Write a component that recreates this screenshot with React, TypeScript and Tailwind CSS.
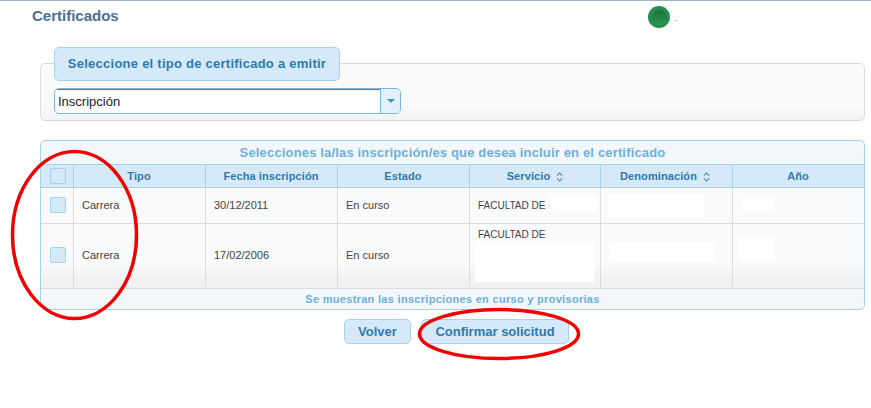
const columns = "grid grid-cols-[32px_132px_132px_132px_131px_132px_132px]";

function SortIcon() {
  return (
    <svg width="7" height="10" viewBox="0 0 7 10" className="ml-[6px] inline-block" fill="none" stroke="#5c93bb" strokeWidth="1.2">
      <path d="M1 3.5 L3.5 1 L6 3.5" />
      <path d="M1 6.5 L3.5 9 L6 6.5" />
    </svg>
  );
}

function Checkbox() {
  return <div className="h-4 w-4 rounded-[2px] border border-[#a9d0ec] bg-[#d6e9f8]" />;
}

function HeadCell({ label, sort, className = "pr-px" }: { label: string; sort?: boolean; className?: string }) {
  return (
    <div className={`flex items-center justify-center border-l border-[#a9d0ec] pt-px ${className}`}>
      {label}
      {sort ? <SortIcon /> : null}
    </div>
  );
}

function Cell({ children, className = "" }: { children?: React.ReactNode; className?: string }) {
  return <div className={`relative flex items-center border-l border-[#dcdcdc] ${className}`}>{children}</div>;
}

export default function App() {
  return (
    <div className="relative h-[408px] w-[871px] overflow-hidden bg-white font-['Liberation_Sans',Arial,sans-serif]">
      <div className="h-px bg-[#9fb3c8]" />
      <header className="flex h-[46px] items-start pl-8 pt-[5px]">
        <h1 className="w-[616px] pt-px text-[15px] leading-[17px] font-bold text-[#4a7094]">Certificados</h1>
        <div className="flex items-end">
          <div className="flex h-[22px] w-[22px] items-center justify-center rounded-full bg-[#278c4e]">
            <div className="h-[15px] w-[15px] rounded-full bg-[linear-gradient(#1d7039,#2a9a55)]" />
          </div>
          <span className="mb-[7px] ml-[5px] h-px w-px bg-[#888]" />
        </div>
      </header>

      <section className="relative mx-10 mt-4 h-[58px] w-[825px] rounded-[5px] border border-[#dcdcdc] bg-[linear-gradient(#f9fafc_0%,#f9fafc_75%,#f0f2f5_100%)] pl-[13px]">
        <div className="absolute -top-[17px] left-[13px] flex h-[34px] w-[286px] items-center justify-center rounded-[5px] border border-[#a9d0ec] bg-[#d6e9f8] text-[13px] font-bold tracking-[0.25px] text-[#2e7aae]">
          Seleccione el tipo de certificado a emitir
        </div>
        <div className="mt-6 flex h-[26px] w-[347px] overflow-hidden rounded-[5px] border border-[#7db5e0] bg-white">
          <div className="flex-1 pl-[3px] text-[13px] leading-[25px] text-[#222] shadow-[inset_0_2px_1px_-1px_#707070]">Inscripción</div>
          <div className="flex w-5 items-center justify-center border-l border-[#7db5e0] bg-[#e3f0fa]">
            <div className="h-0 w-0 border-x-[4px] border-t-[4px] border-x-transparent border-t-[#3d8fc9]" />
          </div>
        </div>
      </section>

      <section className="mx-10 mt-[19px] w-[825px] overflow-hidden rounded-[5px] border border-[#a9d0ec] bg-[#f2f7fc]">
        <div className="flex h-[23px] items-center justify-center text-[13px] font-bold tracking-[0.16px] text-[#6db0de]">
          Selecciones la/las inscripción/es que desea incluir en el certificado
        </div>
        <div className={`${columns} h-6 border-y border-[#a9d0ec] bg-[#d6e9f8] text-[11px] font-bold tracking-[0.1px] text-[#2e7aae]`}>
          <div className="flex items-center justify-center pl-[2px]">
            <Checkbox />
          </div>
          <HeadCell label="Tipo" />
          <HeadCell label="Fecha inscripción" />
          <HeadCell label="Estado" />
          <HeadCell label="Servicio" sort className="pr-0" />
          <HeadCell label="Denominación" sort className="pr-[3px]" />
          <HeadCell label="Año" />
        </div>

        <div className="bg-[linear-gradient(#f9fafc_0%,#f9fafc_76%,#f0f1f3_92%,#f0f1f3_100%)] text-[11px] text-[#444]">
          <div className={`${columns} h-[36px] border-b border-[#dcdcdc]`}>
            <div className="flex items-center justify-center pb-px pl-[2px]"><Checkbox /></div>
            <Cell className="pl-2">Carrera</Cell>
            <Cell className="pl-2">30/12/2011</Cell>
            <Cell className="pl-2">En curso</Cell>
            <Cell className="pl-2 text-[10px]">
              FACULTAD DE
              <div className="absolute top-[7px] left-20 h-[17px] w-[47px] bg-white" />
              <div className="absolute top-[17px] left-[79px] h-px w-px bg-[#bbb]" />
            </Cell>
            <Cell>
              <div className="absolute top-[6px] left-[7px] h-[23px] w-[96px] bg-white" />
            </Cell>
            <Cell>
              <div className="absolute top-[9px] left-[9px] h-[15px] w-[33px] bg-white" />
            </Cell>
          </div>
          <div className={`${columns} h-[65px] border-b border-[#dcdcdc]`}>
            <div className="flex items-center justify-center pb-[2px] pl-[2px]"><Checkbox /></div>
            <Cell className="pb-[2px] pl-2">Carrera</Cell>
            <Cell className="pb-[2px] pl-2">17/02/2006</Cell>
            <Cell className="pb-[2px] pl-2">En curso</Cell>
            <Cell className="items-start pt-[3px] pl-2 text-[10px]">
              FACULTAD DE
              <div className="absolute top-[17px] left-[5px] h-[41px] w-[119px] bg-white" />
            </Cell>
            <Cell>
              <div className="absolute top-[18px] left-2 h-5 w-[106px] bg-white" />
            </Cell>
            <Cell>
              <div className="absolute top-[13px] left-[6px] h-6 w-9 bg-white" />
            </Cell>
          </div>
        </div>

        <div className="flex h-5 items-center justify-center text-[11px] font-bold tracking-[0.3px] text-[#6db0de]">
          Se muestran las inscripciones en curso y provisorias
        </div>
      </section>

      <div className="mt-[9px] flex gap-[10px] pl-[344px]">
        <button className="h-[25px] w-[67px] rounded-[5px] border border-[#a9d0ec] bg-[#d6e9f8] text-[13px] font-bold text-[#2e7aae]">Volver</button>
        <button className="h-[25px] w-[148px] rounded-[5px] border border-[#a9d0ec] bg-[#d6e9f8] text-[13px] font-bold text-[#2e7aae]">Confirmar solicitud</button>
      </div>

      {/* hand drawn red marks over the screenshot */}
      <svg className="pointer-events-none absolute inset-0" width="871" height="408" fill="none" stroke="#f00000" strokeWidth="3.5">
        <ellipse cx="74.5" cy="235" rx="62" ry="83.5" />
        <ellipse cx="499" cy="334" rx="79.5" ry="24.5" />
      </svg>
    </div>
  );
}
